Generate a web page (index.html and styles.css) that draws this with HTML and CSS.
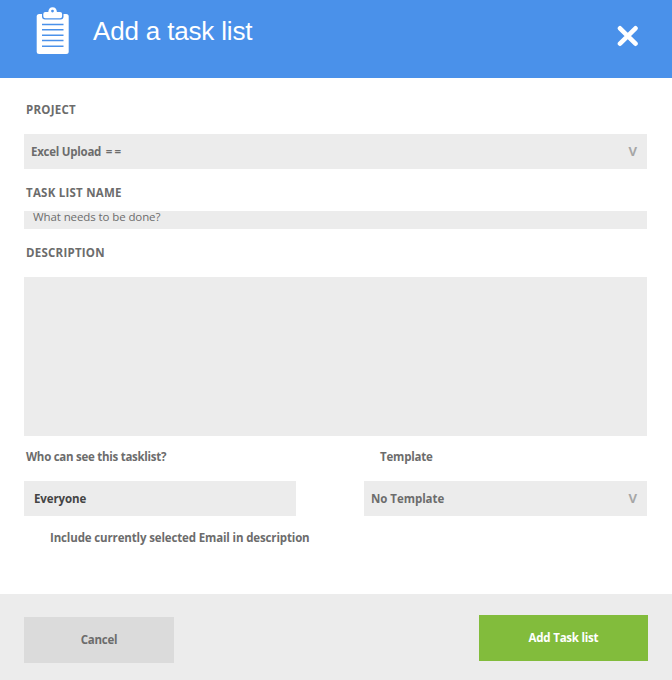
FILE: index.html
```html
<!DOCTYPE html>
<html lang="en">
<head>
<meta charset="utf-8">
<title>Add a task list</title>
<link rel="stylesheet" href="styles.css">
</head>
<body>
<div class="dialog">
  <header class="header">
    <svg class="clipboard" width="34" height="48" viewBox="0 0 34 48" aria-hidden="true">
      <rect x="0.700" y="7" width="32" height="40" rx="2.500" fill="#fff"/>
      <path d="M6 6v3.500q0 3 3 3h15.500q3 0 3-3V6z" fill="#4a91ea"/>
      <path fill-rule="evenodd" d="M9.300 5h3q.3-4.800 4.300-4.800t4.300 4.800h3.200q2 0 2 2v2.200q0 2-2 2h-14.800q-2 0-2-2V7q0-2 2-2zM16.500 2.700a1.400 1.400 0 1 0 0 2.800 1.400 1.400 0 1 0 0-2.800z" fill="#fff"/>
      <path d="M6 17.500h21.500M6 22.700h21.500M6 28.200h21.500M6 33.500h21.500M6 39.200h21.500" stroke="#4a91ea" stroke-width="1.400"/>
    </svg>
    <h1 class="title">Add a task list</h1>
    <svg class="close" width="22" height="22" viewBox="0 0 22 22" role="img" aria-label="Close">
      <path d="M3 3.300L18.500 18.700M18.500 3.300L3 18.700" stroke="#fff" stroke-width="4.600" stroke-linecap="round"/>
    </svg>
  </header>
  <main class="body">
    <div class="label project">PROJECT</div>
    <div class="field select"><span class="t-excel">Excel Upload <span class="equals">==</span></span><span class="arrow">v</span></div>
    <div class="label name">TASK LIST NAME</div>
    <div class="field input">What needs to be done?</div>
    <div class="label desc">DESCRIPTION</div>
    <div class="field area"></div>
    <div class="options">
      <div class="who">
        <div class="label t-who">Who can see this tasklist?</div>
        <div class="field select everyone">Everyone</div>
      </div>
      <div class="template">
        <div class="label t-template">Template</div>
        <div class="field select"><span class="t-none">No Template</span><span class="arrow">v</span></div>
      </div>
    </div>
    <div class="include">Include currently selected Email in description</div>
  </main>
  <footer class="footer">
    <div class="button cancel">Cancel</div>
    <div class="button add">Add Task list</div>
  </footer>
</div>
</body>
</html>
```
FILE: styles.css
```css
* { box-sizing: border-box; }
body { margin: 0; background: #fff; }
.dialog {
  width: 672px;
  height: 680px;
  display: flex;
  flex-direction: column;
  font: 700 11.5px/16px "Open Sans", "Noto Sans", sans-serif;
  color: #6c6c6c;
  white-space: nowrap;
}
.header {
  height: 78px;
  flex: none;
  display: flex;
  align-items: flex-start;
  padding: 7px 33px 0 36px;
  background: #4a91ea;
}
.title {
  margin: 9px 0 0 23px;
  font: 400 26px/30px "Liberation Sans", sans-serif;
  letter-spacing: -0.17px;
  color: #fff;
}
.close { margin: 18px 0 0 auto; }
.body { flex: 1; padding: 24px 25px 0 24px; }
.label { height: 16px; padding-left: 2px; }
.project, .name, .desc { letter-spacing: 0.24px; }
.field { background: #ececec; }
.select {
  height: 35px;
  display: flex;
  align-items: center;
  justify-content: space-between;
  padding: 0 10px 0 7px;
  margin-top: 16px;
}
.t-excel { letter-spacing: -0.25px; }
.equals { margin-left: 2px; letter-spacing: 2px; }
.arrow { font: 600 16px/16px "Open Sans", sans-serif; color: #a6a6a6; margin-top: -4px; }
.name { margin-top: 16px; }
.input {
  height: 18px;
  margin-top: 10px;
  padding-left: 9px;
  line-height: 12px;
  font-weight: 400;
  letter-spacing: -0.1px;
}
.desc { margin-top: 16px; }
.area { height: 159px; margin-top: 16px; }
.options { display: flex; justify-content: space-between; margin-top: 13px; }
.who { width: 272px; }
.template { width: 283px; }
.t-who { letter-spacing: -0.27px; }
.t-template { padding-left: 16px; letter-spacing: -0.2px; }
.t-none { letter-spacing: -0.05px; }
.everyone { padding-left: 10px; color: #444; letter-spacing: -0.12px; }
.include { margin-top: 14px; padding-left: 26px; letter-spacing: -0.14px; }
.footer {
  height: 86px;
  flex: none;
  display: flex;
  align-items: flex-start;
  justify-content: space-between;
  padding: 21px 24px 0;
  background: #ececec;
}
.button { height: 46px; line-height: 46px; text-align: center; letter-spacing: -0.22px; }
.cancel { width: 150px; margin-top: 2px; background: #dbdbdb; }
.add { width: 169px; background: #82bc3c; color: #fff; }
```
